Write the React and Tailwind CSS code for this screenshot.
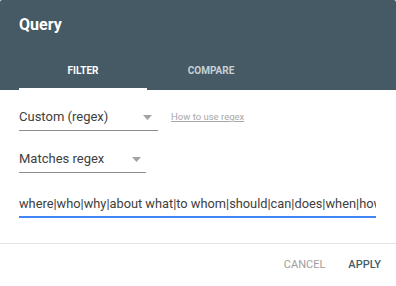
import React from "react";

const tabs = [
  { key: "filter", label: "FILTER", active: true },
  { key: "compare", label: "COMPARE", active: false },
];

function Caret() {
  return (
    <svg width="9" height="5" viewBox="0 0 9 5" className="shrink-0">
      <path d="M0 0h9L4.5 5z" fill="#a3a3a3" />
    </svg>
  );
}

export default function App() {
  return (
    <div className="w-[396px] h-[286px] bg-white flex flex-col font-['Roboto',sans-serif] rounded-[2px] overflow-hidden">
      <header className="bg-[#455a64] h-[90px] flex flex-col">
        <h1 className="pl-[19px] pt-[13px] h-[50px] text-[16px] leading-6 font-bold text-white">
          Query
        </h1>
        <nav className="flex pl-[19px] h-[40px]">
          {tabs.map((tab) => (
            <div
              key={tab.key}
              className={`w-[128px] flex items-center justify-center relative text-[10px] font-bold ${
                tab.active ? "text-white" : "text-[#c9d0d3]"
              }`}
            >
              {tab.label}
              {tab.active && (
                <span className="absolute left-0 right-0 bottom-0 h-[2px] bg-white" />
              )}
            </div>
          ))}
        </nav>
      </header>

      <div className="flex-1 px-[19px] pt-[14px]">
        <div className="flex items-center gap-[13px]">
          <div className="w-[139px] h-[27px] flex items-center justify-between pr-[6px] border-b border-[#8c8c8c] text-[13px] text-[#404040]">
            <span>Custom (regex)</span>
            <Caret />
          </div>
          <a className="text-[9.5px] text-[#a8a8a8] underline">How to use regex</a>
        </div>

        <div className="mt-[15px] w-[127px] h-[27px] flex items-center justify-between pr-[5px] border-b border-[#8c8c8c] text-[13px] text-[#404040]">
          <span>Matches regex</span>
          <Caret />
        </div>

        <div className="mt-[21px] w-[357px] h-[24px] border-b-2 border-[#4285f4] overflow-hidden whitespace-nowrap text-[12.8px] text-[#404040] leading-[20px]">
          where|who|why|about what|to whom|should|can|does|when|how
        </div>
      </div>

      <footer className="border-t border-[#e3e3e3] h-[43px] flex items-center justify-end gap-[23px] pr-[15px] text-[11px]">
        <span className="text-[#9e9e9e]">CANCEL</span>
        <span className="text-[#455a64] font-medium">APPLY</span>
      </footer>
    </div>
  );
}
